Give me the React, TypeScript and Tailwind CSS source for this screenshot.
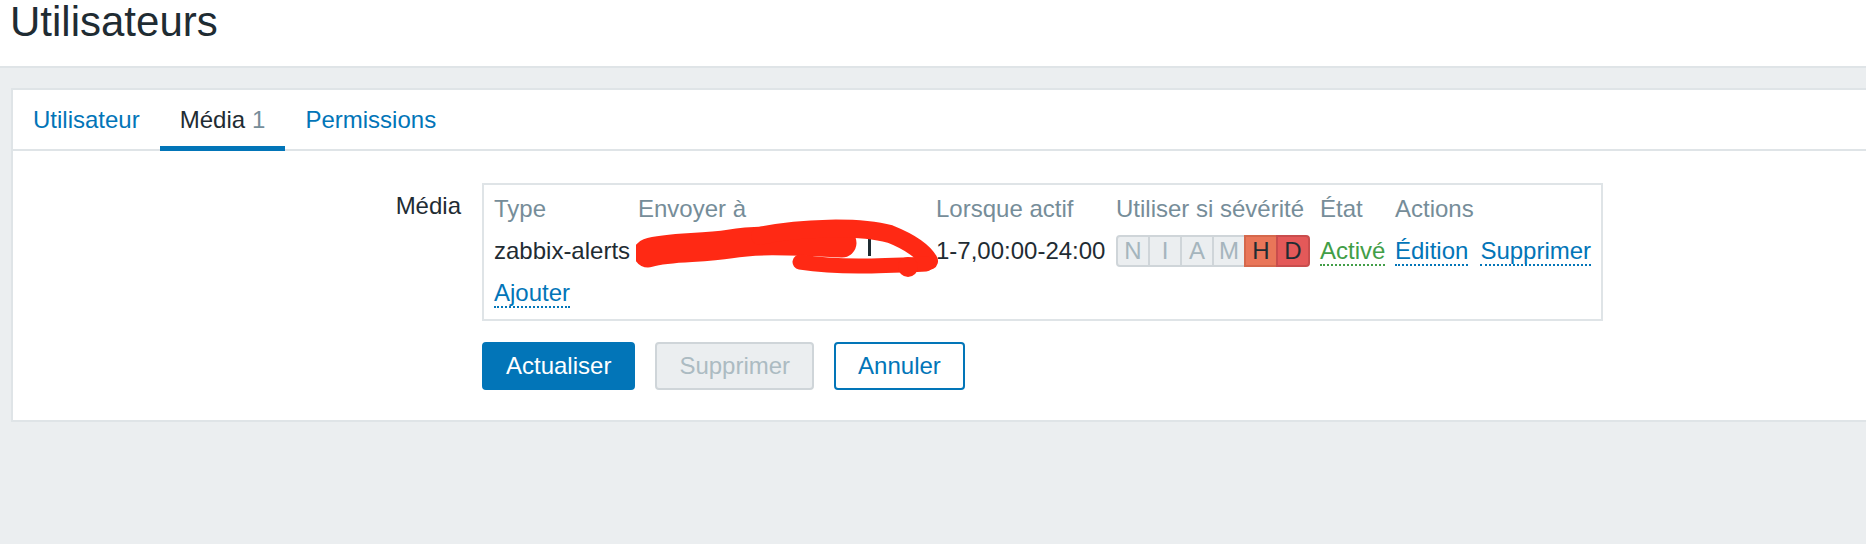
const severities = [
  { label: "N", on: false, bg: "" },
  { label: "I", on: false, bg: "" },
  { label: "A", on: false, bg: "" },
  { label: "M", on: false, bg: "" },
  { label: "H", on: true, bg: "bg-[#e97659] border-[#d5684c]" },
  { label: "D", on: true, bg: "bg-[#e45959] border-[#c94d4d]" },
];

function Tab({ label, count, active }: { label: string; count?: number; active?: boolean }) {
  return (
    <div
      className={
        "h-[61px] px-5 pt-[3px] flex items-center border-b-[5px] " +
        (active ? "border-[#0275b8] text-[#1f2c33]" : "border-transparent text-[#0275b8]")
      }
    >
      {label}
      {count !== undefined && <span className="ml-[7px] text-[#768d99]">{count}</span>}
    </div>
  );
}

function SeverityBox() {
  return (
    <div className="flex">
      {severities.map((s, i) => (
        <div
          key={s.label}
          className={
            "h-[32px] w-[34px] border-2 flex items-center justify-center leading-none " +
            (i > 0 ? "-ml-[2px] " : "rounded-l-[4px] ") +
            (i === severities.length - 1 ? "rounded-r-[4px] " : "") +
            (s.on ? s.bg + " text-[#1f2c33] relative" : "bg-[#ebeef0] border-[#cfd5d9] text-[#a5b5bd]")
          }
        >
          {s.label}
        </div>
      ))}
    </div>
  );
}

export default function App() {
  return (
    <div className="min-h-screen bg-[#ebeef0] font-['Liberation_Sans',Arial,sans-serif] text-[24px] text-[#1f2c33]">
      <header className="h-[68px] bg-white border-b-2 border-[#dfe4e7] pl-[10px]">
        <h1 className="text-[42px] leading-[44px] font-normal">Utilisateurs</h1>
      </header>

      <div className="ml-[11px] mt-[20px] bg-white border-2 border-r-0 border-[#dfe4e7]">
        <nav className="flex h-[61px] border-b-2 border-[#dfe4e7]">
          <Tab label="Utilisateur" />
          <Tab label="Média" count={1} active />
          <Tab label="Permissions" />
        </nav>

        <div className="pt-[32px] pb-[30px]">
          <div className="flex items-start">
            <div className="w-[448px] mr-[21px] mt-[2px] text-right leading-[42px]">Média</div>
            <div className="border-2 border-[#dfe4e7] px-[10px] pt-[3px] pb-[5px]">
              <div className="grid grid-cols-[144px_298px_180px_204px_75px_auto] auto-rows-[42px] items-center leading-[42px] whitespace-nowrap">
                <div className="text-[#768d99]">Type</div>
                <div className="text-[#768d99]">Envoyer à</div>
                <div className="text-[#768d99]">Lorsque actif</div>
                <div className="text-[#768d99]">Utiliser si sévérité</div>
                <div className="text-[#768d99]">État</div>
                <div className="text-[#768d99]">Actions</div>

                <div>zabbix-alerts</div>
                <div className="relative h-[42px]">
                  {/* redaction scribble over the address */}
                  <svg
                    className="absolute left-[-2px] top-[-14px]"
                    width="304"
                    height="68"
                    viewBox="636 216 304 68"
                    fill="none"
                    strokeLinecap="round"
                    strokeLinejoin="round"
                  >
                    <rect x="868" y="238" width="3" height="18" fill="#1f2c33" />
                    <path d="M648 253 C670 246 700 249 730 244 S790 241 842 243" stroke="#ff2914" strokeWidth="29" />
                    <path d="M760 236 C800 227 860 226 890 234 C910 242 924 252 929 261" stroke="#ff2914" strokeWidth="18" />
                    <path d="M800 262 C840 268 880 266 926 264" stroke="#ff2914" strokeWidth="15" />
                    <circle cx="908" cy="267" r="10" fill="#ff2914" />
                  </svg>
                </div>
                <div>1-7,00:00-24:00</div>
                <div className="flex items-center">
                  <SeverityBox />
                </div>
                <div>
                  <span className="text-[#429e47] border-b-2 border-dotted border-[#429e47]">Activé</span>
                </div>
                <div>
                  <span className="mr-[12px] text-[#0275b8] border-b-2 border-dotted border-[#0275b8]">Édition</span>
                  <span className="text-[#0275b8] border-b-2 border-dotted border-[#0275b8]">Supprimer</span>
                </div>

                <div>
                  <span className="text-[#0275b8] border-b-2 border-dotted border-[#0275b8]">Ajouter</span>
                </div>
              </div>
            </div>
          </div>

          <div className="flex gap-5 ml-[469px] mt-[21px]">
            <button className="h-[48px] px-[22px] rounded-[4px] border-2 border-[#0275b8] bg-[#0275b8] text-white leading-none">
              Actualiser
            </button>
            <button className="h-[48px] px-[22px] rounded-[4px] border-2 border-[#cfd5d9] bg-[#ebeef0] text-[#acbbc2] leading-none">
              Supprimer
            </button>
            <button className="h-[48px] px-[22px] rounded-[4px] border-2 border-[#0275b8] bg-white text-[#0275b8] leading-none">
              Annuler
            </button>
          </div>
        </div>
      </div>
    </div>
  );
}
